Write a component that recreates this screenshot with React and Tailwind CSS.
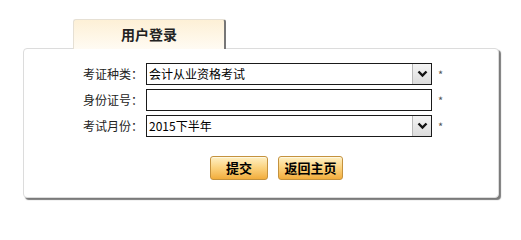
const font = { fontFamily: '"Noto Sans CJK SC", "Liberation Sans", sans-serif' };

const Arrow = () => (
  <span className="flex h-full w-[19px] items-center justify-center border-l border-[#b8b8b8] bg-gradient-to-b from-[#f4f4f4] to-[#dcdcdc]">
    <svg width="11" height="8" viewBox="0 0 11 8">
      <path d="M1.5 1.5 L5.5 5.5 L9.5 1.5" fill="none" stroke="#111" strokeWidth="2.4" />
    </svg>
  </span>
);

const Row = ({ label, children }) => (
  <div className="flex h-[22px] items-center">
    <span className="w-[119px] text-right text-[12px] text-[#222]">{label}</span>
    <div className="ml-[3px] h-[22px] w-[286px]">{children}</div>
    <span className="ml-[6px] text-[11px] text-[#555]">*</span>
  </div>
);

const Btn = ({ children, w }) => (
  <button className={`${w} h-[24px] rounded-[3px] border border-[#c4923e] bg-gradient-to-b from-[#fef0c4] via-[#fbd27c] to-[#f2ad3a] text-[13px] font-bold text-black shadow-[inset_0_1px_0_#fff8e0]`}>
    {children}
  </button>
);

export default function App() {
  return (
    <div className="min-h-[216px] w-[521px] bg-white pl-[23px] pt-[19px]" style={font}>
      <div className="relative z-10 ml-[50px] -mb-px flex h-[30px] w-[153px] items-center justify-center rounded-t-[3px] border-l border-t border-[#e6e0d4] border-r-2 border-r-[#777] bg-gradient-to-b from-[#fdf0d6] to-[#fffbf3]">
        <span className="text-[14px] font-bold text-[#222]">用户登录</span>
      </div>
      <div className="h-[150px] w-[476px] rounded-[4px] border border-[#dcdcdc] bg-white pt-[14px] shadow-[2px_2px_1px_#7a7a7a]">
        <div className="flex flex-col gap-[4px]">
          <Row label="考证种类：">
            <div className="flex h-full items-center border border-[#1a1a1a] bg-white">
              <span className="flex-1 pl-[2px] text-[12px] text-black">会计从业资格考试</span>
              <Arrow />
            </div>
          </Row>
          <Row label="身份证号：">
            <div className="h-full border border-[#1a1a1a] bg-white" />
          </Row>
          <Row label="考试月份：">
            <div className="flex h-full items-center border border-[#1a1a1a] bg-white">
              <span className="flex-1 pl-[2px] text-[12px] text-black">2015下半年</span>
              <Arrow />
            </div>
          </Row>
        </div>
        <div className="ml-[186px] mt-[19px] flex gap-[10px]">
          <Btn w="w-[58px]">提交</Btn>
          <Btn w="w-[65px]">返回主页</Btn>
        </div>
      </div>
    </div>
  );
}
